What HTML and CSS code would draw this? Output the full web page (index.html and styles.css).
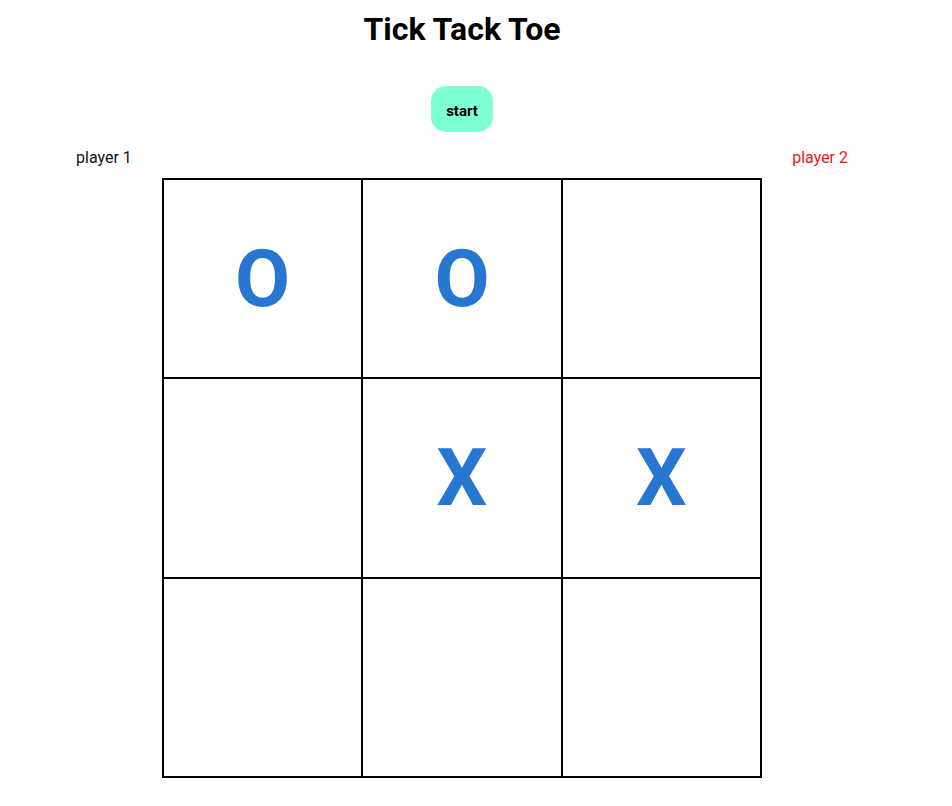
FILE: index.html
```html
<!DOCTYPE html>
<html lang="en">
<head>
<meta charset="utf-8">
<title>Tick Tack Toe</title>
<link rel="stylesheet" href="styles.css">
</head>
<body>
<div class="app">
  <h1 class="title">Tick Tack Toe</h1>
  <div class="controls">
    <button class="start-btn">start</button>
  </div>
  <div class="players">
    <span class="player player-one">player 1</span>
    <span class="player player-two">player 2</span>
  </div>
  <div class="board">
    <div class="cell">O</div>
    <div class="cell">O</div>
    <div class="cell"></div>
    <div class="cell"></div>
    <div class="cell">X</div>
    <div class="cell">X</div>
    <div class="cell"></div>
    <div class="cell"></div>
    <div class="cell"></div>
  </div>
</div>
</body>
</html>
```
FILE: styles.css
```css
body {
  margin: 0;
  font-family: Roboto, "Liberation Sans", Arial, sans-serif;
  background: #fff;
  color: #000;
}

.app {
  width: 924px;
  display: flex;
  flex-direction: column;
  align-items: center;
}

.title {
  margin: 10px 0 0;
  font-size: 32px;
  line-height: 38px;
  font-weight: 700;
}

.controls {
  margin-top: 38px;
  display: flex;
  justify-content: center;
}

.start-btn {
  height: 46px;
  padding: 3px 15px 0;
  border: none;
  border-radius: 15px;
  background: #7fffd4;
  font-family: Roboto, "Liberation Sans", Arial, sans-serif;
  font-size: 15px;
  font-weight: 700;
  color: #000;
}

.players {
  align-self: stretch;
  margin-top: 16px;
  padding: 0 76px;
  display: flex;
  justify-content: space-between;
  font-size: 16px;
  line-height: 19px;
}

.player-one {
  color: #111;
}

.player-two {
  color: #f01818;
}

.board {
  margin-top: 11px;
  width: 600px;
  height: 600px;
  box-sizing: border-box;
  border: 1px solid #000;
  display: grid;
  grid-template-columns: repeat(3, 1fr);
  grid-template-rows: repeat(3, 1fr);
}

.cell {
  border: 1px solid #000;
  display: flex;
  align-items: center;
  justify-content: center;
  font-size: 80px;
  font-weight: 700;
  color: #2776d2;
}
```
